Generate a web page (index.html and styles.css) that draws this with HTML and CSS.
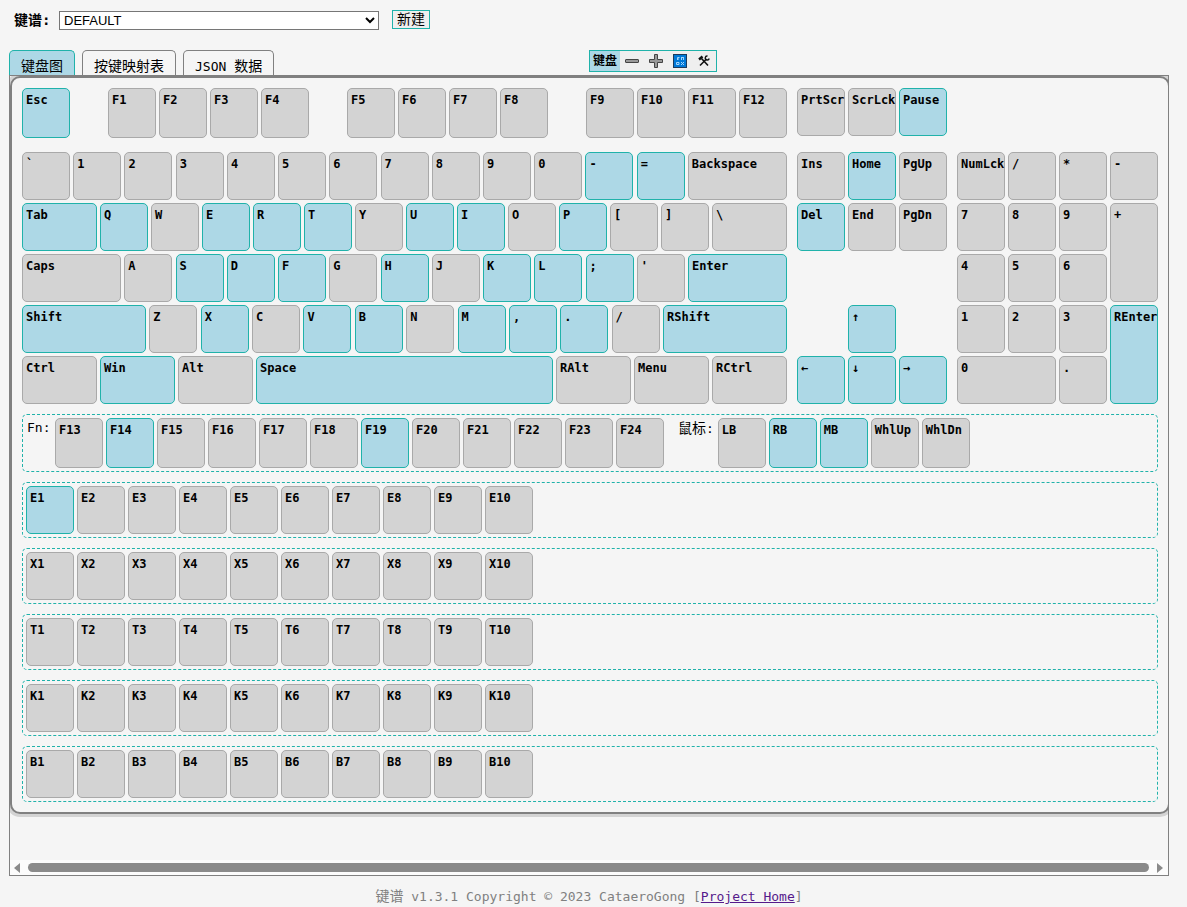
FILE: index.html
```html
<!DOCTYPE html>
<html lang="zh-CN">
<head>
<meta charset="utf-8">
<title>键谱</title>
<link rel="stylesheet" href="styles.css">
</head>
<body>
<header class="topbar">
  <label class="topbar-label" for="keymap">键谱:</label>
  <select class="keymap-select" id="keymap"><option>DEFAULT</option></select>
  <button class="new-button" type="button">新建</button>
</header>

<div class="tabbar">
  <nav class="tabs">
    <button class="tab active" type="button">键盘图</button>
    <button class="tab" type="button">按键映射表</button>
    <button class="tab" type="button"><span class="latin">JSON </span>数据</button>
  </nav>
  <div class="tools">
    <span class="tools-label">键盘</span>
    <button class="tool" type="button" aria-label="缩小"><svg width="16" height="16" viewBox="0 0 16 16"><rect x="1.500" y="6.500" width="13" height="3" rx=".5" fill="#999" stroke="#444"/></svg></button>
    <button class="tool" type="button" aria-label="放大"><svg width="16" height="16" viewBox="0 0 16 16"><path d="M6.500 1.500h3v5h5v3h-5v5h-3v-5h-5v-3h5z" fill="#999" stroke="#444"/></svg></button>
    <button class="tool" type="button" aria-label="按键符号"><svg width="16" height="16" viewBox="0 0 16 16"><rect x="1.500" y="1.500" width="13" height="13" fill="#0078d7" stroke="#1b3a5c"/><path d="M5.500 7V4.500h2M5.500 6h1.500M9.500 4v3M9.500 4.500h2M11.500 4v3M4.500 9.500h2.500v2H4.500zM9 9l3 3M12 9l-3 3" fill="none" stroke="#a5d5fa"/></svg></button>
    <button class="tool" type="button" aria-label="设置"><svg width="16" height="16" viewBox="0 0 16 16"><path d="M3 6.500L6.500 3.500" stroke="#111" stroke-width="2.400"/><path d="M5.500 5.500l6.500 7" stroke="#111" stroke-width="1.600"/><path d="M4 12.500l6.500-6.500" stroke="#111" stroke-width="1.600"/><path d="M11.500 3A2 2 0 1 0 13.200 5.500" fill="none" stroke="#111" stroke-width="1.400"/></svg></button>
  </div>
</div>

<main class="viewport">
  <div class="canvas">
    <section class="panel">
      <div class="keyboard">
        <div class="block main-block">
          <div class="row function-row">
            <button class="key on">Esc</button>
            <div class="group"><button class="key">F1</button><button class="key">F2</button><button class="key">F3</button><button class="key">F4</button></div>
            <div class="group"><button class="key">F5</button><button class="key">F6</button><button class="key">F7</button><button class="key">F8</button></div>
            <div class="group"><button class="key">F9</button><button class="key">F10</button><button class="key">F11</button><button class="key">F12</button></div>
          </div>
          <div class="row">
            <button class="key">`</button><button class="key">1</button><button class="key">2</button><button class="key">3</button><button class="key">4</button><button class="key">5</button><button class="key">6</button><button class="key">7</button><button class="key">8</button><button class="key">9</button><button class="key">0</button><button class="key on">-</button><button class="key on">=</button><button class="key w-lg">Backspace</button>
          </div>
          <div class="row">
            <button class="key on w-md">Tab</button><button class="key on">Q</button><button class="key">W</button><button class="key on">E</button><button class="key on">R</button><button class="key on">T</button><button class="key">Y</button><button class="key on">U</button><button class="key on">I</button><button class="key">O</button><button class="key on">P</button><button class="key">[</button><button class="key">]</button><button class="key w-md">\</button>
          </div>
          <div class="row">
            <button class="key w-lg">Caps</button><button class="key">A</button><button class="key on">S</button><button class="key on">D</button><button class="key on">F</button><button class="key">G</button><button class="key on">H</button><button class="key">J</button><button class="key on">K</button><button class="key on">L</button><button class="key on">;</button><button class="key">'</button><button class="key on w-lg">Enter</button>
          </div>
          <div class="row">
            <button class="key on w-xl">Shift</button><button class="key">Z</button><button class="key on">X</button><button class="key">C</button><button class="key on">V</button><button class="key on">B</button><button class="key">N</button><button class="key on">M</button><button class="key on">,</button><button class="key on">.</button><button class="key">/</button><button class="key on w-xl">RShift</button>
          </div>
          <div class="row">
            <button class="key w-md">Ctrl</button><button class="key on w-md">Win</button><button class="key w-md">Alt</button><button class="key on w-space">Space</button><button class="key w-md">RAlt</button><button class="key w-md">Menu</button><button class="key w-md">RCtrl</button>
          </div>
        </div>
        <div class="block">
          <div class="row nav-top"><button class="key">PrtScr</button><button class="key">ScrLck</button><button class="key on">Pause</button></div>
          <div class="pad nav-pad">
            <button class="key">Ins</button><button class="key on">Home</button><button class="key">PgUp</button>
            <button class="key on">Del</button><button class="key">End</button><button class="key">PgDn</button>
            <button class="key on arrow-up">↑</button>
            <button class="key on arrow-left">←</button><button class="key on arrow-down">↓</button><button class="key on arrow-right">→</button>
          </div>
        </div>
        <div class="block num-block">
          <div class="pad num-pad">
            <button class="key">NumLck</button><button class="key">/</button><button class="key">*</button><button class="key">-</button>
            <button class="key">7</button><button class="key">8</button><button class="key">9</button><button class="key tall">+</button>
            <button class="key">4</button><button class="key">5</button><button class="key">6</button>
            <button class="key">1</button><button class="key">2</button><button class="key">3</button><button class="key on tall">REnter</button>
            <button class="key wide">0</button><button class="key">.</button>
          </div>
        </div>
      </div>

      <div class="extra extra-fn">
        <span class="extra-label latin">Fn:</span>
        <button class="key">F13</button><button class="key on">F14</button><button class="key">F15</button><button class="key">F16</button><button class="key">F17</button><button class="key">F18</button><button class="key on">F19</button><button class="key">F20</button><button class="key">F21</button><button class="key">F22</button><button class="key">F23</button><button class="key">F24</button>
        <div class="group mouse">
          <span class="extra-label">鼠标<span class="latin">:</span></span>
          <button class="key">LB</button><button class="key on">RB</button><button class="key on">MB</button><button class="key">WhlUp</button><button class="key">WhlDn</button>
        </div>
      </div>
      <div class="extra"><button class="key on">E1</button><button class="key">E2</button><button class="key">E3</button><button class="key">E4</button><button class="key">E5</button><button class="key">E6</button><button class="key">E7</button><button class="key">E8</button><button class="key">E9</button><button class="key">E10</button></div>
      <div class="extra"><button class="key">X1</button><button class="key">X2</button><button class="key">X3</button><button class="key">X4</button><button class="key">X5</button><button class="key">X6</button><button class="key">X7</button><button class="key">X8</button><button class="key">X9</button><button class="key">X10</button></div>
      <div class="extra"><button class="key">T1</button><button class="key">T2</button><button class="key">T3</button><button class="key">T4</button><button class="key">T5</button><button class="key">T6</button><button class="key">T7</button><button class="key">T8</button><button class="key">T9</button><button class="key">T10</button></div>
      <div class="extra"><button class="key">K1</button><button class="key">K2</button><button class="key">K3</button><button class="key">K4</button><button class="key">K5</button><button class="key">K6</button><button class="key">K7</button><button class="key">K8</button><button class="key">K9</button><button class="key">K10</button></div>
      <div class="extra"><button class="key">B1</button><button class="key">B2</button><button class="key">B3</button><button class="key">B4</button><button class="key">B5</button><button class="key">B6</button><button class="key">B7</button><button class="key">B8</button><button class="key">B9</button><button class="key">B10</button></div>
    </section>
  </div>
  <div class="scrollbar">
    <svg width="6" height="10" viewBox="0 0 6 10"><path d="M6 0v10L0 5z" fill="#8b8b8b"/></svg>
    <div class="thumb"></div>
    <svg width="6" height="10" viewBox="0 0 6 10"><path d="M0 0v10l6-5z" fill="#8b8b8b"/></svg>
  </div>
</main>

<footer class="footer">键谱<span class="latin"> v1.3.1 Copyright © 2023 CataeroGong [<a class="home-link" href="#home">Project Home</a>]</span></footer>
</body>
</html>
```

FILE: styles.css
```css
* {
  box-sizing: border-box;
}

body {
  margin: 0;
  padding: 10px 18px 0 9px;
  background: whitesmoke;
  color: black;
  font: 14px/20px "DejaVu Sans Mono", "Noto Sans CJK SC", monospace;
}

button {
  margin: 0;
  font-family: inherit;
  color: inherit;
}

.latin {
  font-size: 13px;
  white-space: pre;
}

/* Keymap selection */
.topbar {
  display: flex;
  align-items: flex-start;
  height: 20px;
  margin-bottom: 20px;
  padding-left: 5px;
}

.topbar-label {
  width: 45px;
  font-weight: bold;
}

.keymap-select {
  align-self: flex-end;
  width: 320px;
  height: 19px;
  margin-right: 13px;
  padding: 0;
  border: 1px solid #767676;
  background: white;
  color: black;
  font: 13px "Liberation Sans", sans-serif;
}

.new-button {
  height: 19px;
  padding: 0 4px;
  border: 1px solid lightseagreen;
  background: #efefef;
  font-size: 14px;
  line-height: 17px;
}

/* Tabs and keyboard tools */
.tabbar {
  display: grid;
  grid-template-columns: 1fr 1fr;
  align-items: start;
}

.tabs {
  display: flex;
  gap: 7px;
}

.tab {
  height: 25px;
  padding: 6px 11px 0;
  border: 1px solid gray;
  border-bottom: 0;
  border-radius: 5px 5px 0 0;
  background: whitesmoke;
  font-size: 14px;
  line-height: 18px;
  white-space: nowrap;
}

.tab.active {
  border-color: lightseagreen;
  background: lightblue;
}

.tools {
  display: flex;
  justify-self: start;
  height: 22px;
  border: 1px solid lightseagreen;
  background: #efefef;
}

.tools-label {
  padding: 0 3px;
  background: lightblue;
  font-size: 12px;
  font-weight: bold;
}

.tool {
  display: grid;
  place-items: center;
  width: 24px;
  padding: 0;
  border: 0;
  background: none;
}

/* Scrolling view */
.viewport {
  overflow: hidden;
  border: 1px solid gray;
}

.canvas {
  padding-bottom: 46px;
}

.panel {
  display: flex;
  flex-direction: column;
  gap: 10px;
  width: calc(100% + 2px);
  padding: 10px;
  border: 2px solid gray;
  border-radius: 10px;
  background: whitesmoke;
  box-shadow: 0 0 0 3px lightgray;
}

.keyboard {
  display: flex;
  gap: 10px;
}

.block {
  display: flex;
  flex-direction: column;
  gap: 3px;
}

.main-block {
  flex: 1;
}

.row {
  display: flex;
  justify-content: space-between;
}

.function-row {
  margin-bottom: 11px;
}

.group {
  display: flex;
  gap: 3px;
}

.nav-top {
  margin-bottom: 13px;
}

.num-block {
  justify-content: flex-end;
}

.pad {
  display: grid;
  grid-auto-rows: 48px;
  gap: 3px;
}

.nav-pad {
  grid-template-columns: repeat(3, 48px);
}

.num-pad {
  grid-template-columns: repeat(4, 48px);
}

.arrow-up {
  grid-area: 4 / 2;
}

.arrow-left {
  grid-area: 5 / 1;
}

.arrow-down {
  grid-area: 5 / 2;
}

.arrow-right {
  grid-area: 5 / 3;
}

.key {
  display: flex;
  flex: none;
  align-items: flex-start;
  width: 48px;
  height: 48px;
  padding: 4px 3px;
  border: 1px solid darkgray;
  border-radius: 5px;
  background: lightgray;
  font-size: 12px;
  font-weight: bold;
  line-height: 14px;
  white-space: nowrap;
}

.key.on {
  border-color: lightseagreen;
  background: lightblue;
}

.function-row .key,
.extra-fn .key {
  height: 50px;
}

.key.w-md {
  width: 75px;
}

.key.w-lg {
  width: 99px;
}

.key.w-xl {
  width: 124px;
}

.key.w-space {
  width: 297px;
}

.key.tall {
  grid-row: span 2;
  height: auto;
}

.key.wide {
  grid-column: span 2;
  width: auto;
}

.extra {
  display: flex;
  gap: 3px;
  padding: 3px;
  border: 1px dashed lightseagreen;
  border-radius: 5px;
}

.extra-label {
  padding: 0 1px;
}

.extra-label.latin {
  width: 26px;
}

.mouse {
  margin-left: 10px;
}

.scrollbar {
  display: flex;
  align-items: center;
  gap: 8px;
  height: 15px;
  padding: 0 5px 0 4px;
  background: #fcfcfc;
}

.thumb {
  flex: 1;
  height: 9px;
  border-radius: 5px;
  background: #8b8b8b;
}

.footer {
  margin-top: 10px;
  color: gray;
  text-align: center;
}

.home-link {
  color: #551a8b;
}
```
